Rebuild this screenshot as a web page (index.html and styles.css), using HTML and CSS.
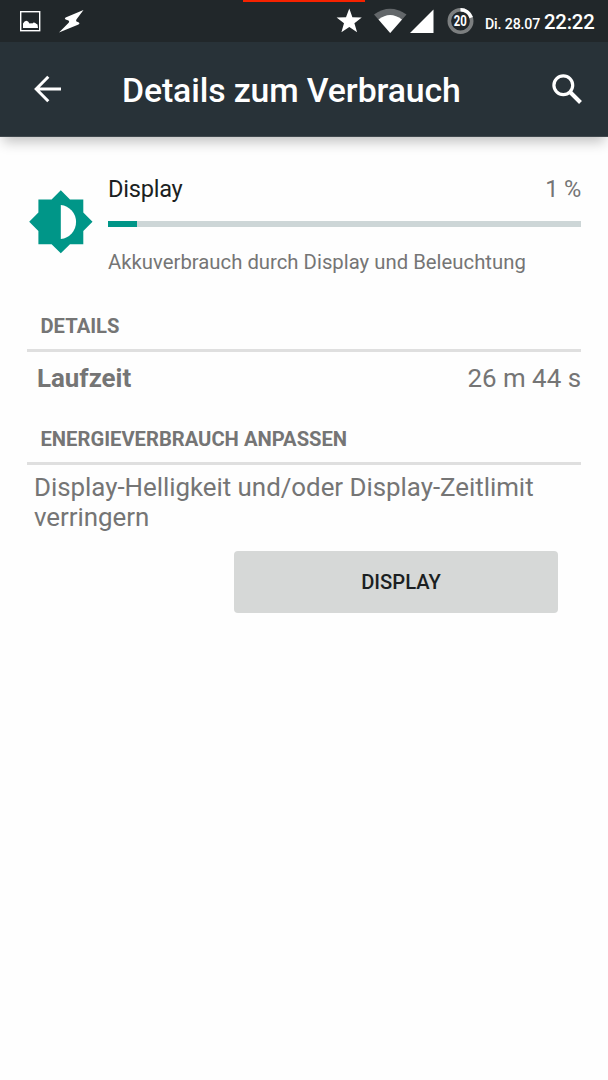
FILE: index.html
```html
<!DOCTYPE html>
<html lang="de">
<head>
<meta charset="utf-8">
<title>Details zum Verbrauch</title>
<link rel="stylesheet" href="styles.css">
</head>
<body>
<header class="top">
  <div class="statusbar">
    <span class="load"></span>
    <svg class="notes" width="90" height="42" viewBox="0 0 90 42">
      <rect x="20.700" y="11.700" width="19" height="19" fill="none" stroke="#fff" stroke-width="1.400"/>
      <path d="M23 28v-4.500q1.500-2.500 3.300-2.800q2 .2 3.200 2.800q2-.5 2.800 0q1.500-1.700 3-.4q.8 1 2.200 1.400l.5 3.500z" fill="#fff"/>
      <path d="M83.500 10L65.600 17.500q-1.600 1 0 1.900l2.900 1q1.300.8.2 2.300L59 32.500l19.500-8q1.800-1 .4-2l-2.300-.9q-1-.5-.2-2.200z" fill="#fff"/>
    </svg>
    <svg class="signals" width="145" height="42" viewBox="335 0 145 42">
      <path d="M349.300 8.500l3.100 8.700 9.400.2-7.400 5.800 2.700 9-7.800-5.300-7.900 5.300 2.600-9-7.400-5.800 9.400-.2z" fill="#fff"/>
      <path d="M374 14.500Q390 3 406.500 14.500L390.200 33z" fill="#63676a"/>
      <path d="M378.500 19.500Q390 10.500 402 19.500L390.200 33z" fill="#fff"/>
      <path d="M433.500 9.500v23.600H410z" fill="#fff"/>
      <circle cx="460.500" cy="21" r="11.200" fill="none" stroke="#7c7f80" stroke-width="3.600"/>
      <path d="M460.500 9.800a11.200 11.200 0 0 1 10.700 7.800" fill="none" stroke="#fff" stroke-width="3.600"/>
      <text x="460.300" y="25.700" text-anchor="middle" class="batt" textLength="13" lengthAdjust="spacingAndGlyphs">20</text>
    </svg>
    <span class="date">Di. 28.07</span>
    <span class="time">22:22</span>
  </div>
  <div class="appbar">
    <svg class="back" width="28" height="28" viewBox="0 0 28 28" fill="none" stroke="#fff" stroke-width="3"><path d="M27 14H2.500M14.300 1.800L2.200 14l12.100 12.200"/></svg>
    <h1 class="title">Details zum Verbrauch</h1>
    <svg class="search" width="30" height="30" viewBox="0 0 30 30" fill="none" stroke="#fff"><circle cx="11.300" cy="11.300" r="9.400" stroke-width="3.200"/><path d="M18.500 18.500l10 10" stroke-width="4"/></svg>
  </div>
</header>
<main class="content">
  <section class="summary">
    <svg class="bright" width="64" height="64" viewBox="0 0 64 64">
      <path d="M31.800.3L41 9.400H54.300V22.600L63.500 31.800 54.300 41V54.200H41L31.800 63.300 22.600 54.200H9.400V41L.2 31.800 9.400 22.600V9.400H22.600z" fill="#009688"/>
      <path d="M31.800 15a17.100 17.100 0 0 1 0 34z" fill="#fff"/>
    </svg>
    <div class="usage">
      <div class="usage-head"><span class="name">Display</span><span class="percent">1 %</span></div>
      <div class="track"><div class="fill"></div></div>
      <p class="desc">Akkuverbrauch durch Display und Beleuchtung</p>
    </div>
  </section>
  <h2 class="heading">DETAILS</h2>
  <div class="row"><b>Laufzeit</b><span>26 m 44 s</span></div>
  <h2 class="heading">ENERGIEVERBRAUCH ANPASSEN</h2>
  <p class="hint">Display-Helligkeit und/oder Display-Zeitlimit verringern</p>
  <button class="action" type="button">DISPLAY</button>
</main>
</body>
</html>
```
FILE: styles.css
```css
* { box-sizing: border-box; }
body {
  margin: 0;
  min-height: 1080px;
  background: #fefefe;
  color: #757575;
  font-family: Roboto, sans-serif;
}
h1, h2, p { margin: 0; }
svg { display: block; flex: none; }
.top { height: 137px; background: #283238; box-shadow: 0 8px 12px -3px rgba(0, 0, 0, .24); border-bottom: 1px solid #41494e; }
.statusbar {
  position: relative;
  display: flex;
  height: 42px;
  padding-right: 13.500px;
  background: #21272a;
  color: #fff;
  font-weight: 500;
  white-space: nowrap;
}
.load { position: absolute; left: 243px; top: 0; width: 122px; height: 2px; background: #f62200; }
.signals { margin-left: 245px; }
.batt { font: 700 14px Roboto, sans-serif; fill: #fff; }
.date { margin-left: 5px; font-size: 14.200px; letter-spacing: -.15px; line-height: 48px; }
.time { margin-left: auto; font-size: 20.300px; letter-spacing: -.2px; line-height: 44px; }
.appbar { display: flex; align-items: center; height: 94px; padding: 0 26px 0 34px; color: #fff; }
.title { margin-left: 60px; font-size: 33.800px; letter-spacing: -.12px; font-weight: 500; line-height: 40px; padding-top: 3px; white-space: nowrap; }
.search { margin-left: auto; }
.content { padding: 37px 27px 0; }
.summary { display: flex; height: 140px; }
.bright { margin: 16px 15px 0 2px; }
.usage { flex: 1; }
.usage-head { display: flex; justify-content: space-between; font-size: 23.600px; letter-spacing: -.25px; line-height: 30px; }
.name { color: #1b1f22; }
.track { height: 6px; margin-top: 17px; background: #cdd6d7; }
.fill { width: 29px; height: 6px; background: #009688; }
.desc { margin-top: 23px; font-size: 20.300px; letter-spacing: .015px; line-height: 24px; white-space: nowrap; }
.heading { height: 38px; padding: 0 0 0 13.500px; border-bottom: 3px solid #dfdfdf; font-size: 20.200px; font-weight: 700; line-height: 25px; }
.row { display: flex; justify-content: space-between; height: 75px; padding: 11px 0 0 10px; font-size: 25.900px; line-height: 30px; }
.hint { padding: 7px 0 0 7px; font-size: 25.900px; letter-spacing: -.03px; line-height: 30px; }
.action {
  display: block;
  width: 324px;
  height: 62px;
  margin: 18.500px 23.500px 0 auto;
  padding: 0 0 0 11px;
  border: 0;
  border-radius: 4px;
  background: #d6d8d7;
  color: #1b1f22;
  font: 500 20.200px/62px Roboto, sans-serif;
}
```
